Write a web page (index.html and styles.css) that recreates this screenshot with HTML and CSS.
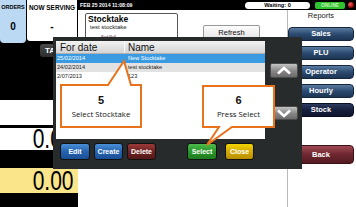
FILE: index.html
```html
<!DOCTYPE html>
<html>
<head>
<meta charset="utf-8">
<link rel="stylesheet" href="styles.css">
</head>
<body>
<div class="screen">
  <aside class="side">
    <div class="counters">
      <div class="orders"><div class="lbl">ORDERS</div><div class="val">0</div></div>
      <div class="serving"><div class="lbl">NOW SERVING</div><div class="val">-</div></div>
    </div>
    <div class="take">TAKE</div>
    <div class="band blank"></div>
    <div class="band total"><span class="big">0.00</span></div>
    <div class="band due"><span class="big">0.00</span></div>
  </aside>
  <main class="main">
    <header class="topbar">
      <span class="clock">FEB 25 2014 11:08:09</span>
      <span class="waiting">Waiting: 0</span>
      <span class="online">ONLINE</span>
      <span class="led"></span>
    </header>
    <div class="content">
      <section class="work">
        <div class="stock-card">
          <div class="card-title">Stocktake</div>
          <div class="card-sub">test stocktake</div>
          <div class="card-tiny">Bad Bull</div>
        </div>
        <div class="refresh">Refresh</div>
      </section>
      <nav class="reports">
        <div class="rhead">Reports</div>
        <div class="rbtn">Sales</div>
        <div class="rbtn">PLU</div>
        <div class="rbtn">Operator</div>
        <div class="rbtn">Hourly</div>
        <div class="rbtn active">Stock</div>
        <div class="rbtn back">Back</div>
      </nav>
    </div>
  </main>
</div>

<div class="dialog">
  <div class="list">
    <div class="lrow head"><span class="c1">For date</span><span class="c2">Name</span></div>
    <div class="lrow sel"><span class="c1">25/02/2014</span><span class="c2">New Stocktake</span></div>
    <div class="lrow alt"><span class="c1">24/02/2014</span><span class="c2">test stocktake</span></div>
    <div class="lrow"><span class="c1">2/07/2013</span><span class="c2">123</span></div>
  </div>
  <div class="arrows">
    <div class="arrow up"><svg width="16" height="9" viewBox="0 0 16 9"><polyline points="2,7.5 8,2 14,7.5" fill="none" stroke="#fff" stroke-width="2.6"/></svg></div>
    <div class="arrow down"><svg width="16" height="9" viewBox="0 0 16 9"><polyline points="2,1.5 8,7 14,1.5" fill="none" stroke="#fff" stroke-width="2.6"/></svg></div>
  </div>
  <div class="actions">
    <div class="dbtn blue">Edit</div>
    <div class="dbtn blue create">Create</div>
    <div class="dbtn red">Delete</div>
    <div class="dbtn green select">Select</div>
    <div class="dbtn yellow close">Close</div>
  </div>

  <div class="callout c5">
    <svg class="bubble" width="82" height="69" viewBox="0 0 82 69"><path d="M1,26 H48 L64,2 L71,26 H81 V68 H1 Z" fill="#fff" stroke="#e8731c" stroke-width="2" stroke-linejoin="miter"/></svg>
    <div class="num">5</div>
    <div class="cap">Select Stocktake</div>
  </div>
  <div class="callout c6">
    <svg class="bubble" width="73" height="62" viewBox="0 0 73 62"><path d="M1,1 H72 V42 H30 L5,60 L17,42 H1 Z" fill="#fff" stroke="#e8731c" stroke-width="2" stroke-linejoin="miter"/></svg>
    <div class="num">6</div>
    <div class="cap">Press Select</div>
  </div>
</div>
</body>
</html>
```

FILE: styles.css
```css
* { box-sizing: border-box; }
html, body { margin: 0; padding: 0; }
body {
  width: 356px;
  height: 207px;
  overflow: hidden;
  background: #000;
  font-family: "Liberation Sans", Arial, sans-serif;
  position: relative;
  color: #000;
}
.screen { display: flex; height: 207px; }

/* left column */
.side { width: 78px; flex: none; display: flex; flex-direction: column; }
.counters { display: flex; gap: 1px; align-items: flex-start; }
.orders { width: 26px; height: 43px; background: #bcd9f3; border-radius: 0 0 4px 4px; text-align: center; }
.serving { width: 50px; height: 41px; background: #fff; border-radius: 0 0 3px 3px; text-align: center; }
.lbl { font-weight: bold; font-size: 6.4px; line-height: 7px; padding-top: 4px; white-space: nowrap; }
.orders .lbl { font-size: 5.5px; }
.val { font-weight: bold; font-size: 10px; line-height: 10px; margin-top: 11px; }
.take {
  margin: 1px 0 0 40px; height: 13px; width: 38px;
  background: linear-gradient(#4a4a4a, #2c2c2c);
  color: #fff; font-weight: bold; font-size: 8px; line-height: 13px;
  padding-left: 5px; border-radius: 3px 0 0 3px;
}
.band { background: #fff; display: flex; justify-content: flex-end; align-items: center; padding-right: 5px; }
.blank { margin-top: 43px; height: 25px; }
.total { margin-top: 3px; height: 22px; }
.due { margin-top: 18px; height: 25px; background: #fbe58b; }
.big {
  display: block; font-size: 28px; line-height: 32px;
  transform: scaleX(0.75); transform-origin: right center;
}

/* main */
.main { flex: 1; display: flex; flex-direction: column; }
.topbar { height: 10px; flex: none; display: flex; align-items: center; padding: 0 2px; background: #000; }
.clock { color: #fff; font-weight: bold; font-size: 5.2px; white-space: nowrap; }
.waiting {
  margin-left: auto; width: 65px; height: 7px; background: #fff; border-radius: 4px;
  font-size: 5.6px; font-weight: bold; text-align: center; line-height: 7px;
}
.online {
  margin-left: 5px; width: 30px; height: 7px; background: #2fc32f; border-radius: 2px;
  color: #c8f5bd; font-size: 4.8px; font-weight: bold; text-align: center; line-height: 7px;
}
.led {
  margin-left: 3px; width: 6px; height: 6px; border-radius: 50%;
  background: radial-gradient(circle at 35% 35%, #ff6060, #8a0000 70%);
}
.content { flex: 1; background: #fff; display: flex; }
.work { flex: 1; display: flex; align-items: flex-start; padding: 3px 0 0 7px; }
.stock-card { width: 93px; height: 40px; border: 1px solid #555; border-radius: 2px; padding: 1px 2px; }
.card-title { font-weight: bold; font-size: 8.5px; line-height: 9px; }
.card-sub { font-size: 6px; line-height: 7px; margin-left: 2px; color: #222; }
.card-tiny { font-size: 4px; line-height: 5px; margin: 3px 0 0 13px; color: #5a3030; }
.refresh {
  margin: 12px 0 0 25px; width: 57px; height: 16px;
  border: 1px solid #999; border-radius: 2px;
  background: linear-gradient(#fdfdfd, #e2e2e2);
  font-size: 7.5px; line-height: 14px; text-align: center; color: #111;
}
.reports { width: 69px; flex: none; border-left: 1px solid #bbb; display: flex; flex-direction: column; }
.rhead { height: 17px; font-size: 7.5px; line-height: 11px; text-align: center; padding-right: 2px; color: #222; }
.rbtn {
  width: 66px; height: 14px; margin-bottom: 5px;
  border-radius: 4px; border: 1px solid #16273d;
  background: linear-gradient(#5a7ba0, #2c4b70 50%, #1c3554);
  color: #fff; font-weight: bold; font-size: 7.5px; line-height: 12px; text-align: center;
}
.rbtn.active { background: linear-gradient(#2e3a5c, #161f3c 50%, #0e1530); border-color: #0a0f22; }
.rbtn.back {
  margin-top: 23px; height: 19px; line-height: 17px;
  background: linear-gradient(#a04a52, #6e2730 50%, #551b22); border-color: #3a1015;
}

/* dialog overlay */
.dialog {
  position: absolute; left: 53px; top: 37px; width: 249px; height: 132px;
  padding: 4px 4px 0 3px; background: #272b2c;
  display: grid; grid-template-columns: 209px 28px; grid-template-rows: 98px 17px;
  column-gap: 5px; row-gap: 4px;
}
.list { background: #fff; overflow: hidden; }
.lrow { display: flex; height: 9px; font-size: 5.6px; line-height: 9px; color: #222; white-space: nowrap; }
.lrow .c1 { width: 71px; padding-left: 1px; }
.lrow .c2 { padding-left: 1px; }
.lrow.head {
  height: 13px; font-size: 10px; line-height: 13px; color: #111;
  background: linear-gradient(#f2f2f2, #d4d4d4); border-bottom: 1px solid #b0b0b0;
}
.lrow.head .c1 { width: 69px; padding-left: 4px; border-right: 1px solid #fafafa; }
.lrow.head .c2 { padding-left: 3px; }
.lrow.sel { background: #3a9be2; color: #fff; }
.lrow.alt { background: #e2e2e2; }
.arrows { display: flex; flex-direction: column; padding-top: 22px; }
.arrow {
  height: 15px; border: 1px solid #4a4a4a; border-radius: 2px;
  background: linear-gradient(#c4c4c4, #8a8a8a 50%, #6a6a6a);
  display: flex; align-items: center; justify-content: center;
}
.arrow.down { margin-top: 28px; height: 14px; }
.actions { grid-column: 1 / 3; display: flex; padding-left: 4px; }
.dbtn {
  width: 29px; height: 17px; border-radius: 3px; border: 1px solid #111;
  color: #fff; font-weight: bold; font-size: 7px; line-height: 15px; text-align: center;
  margin-right: 4px;
}
.dbtn.blue { background: linear-gradient(#4a8fd8, #2563b0 50%, #1a4f95); width: 30px; }
.dbtn.create { width: 29px; }
.dbtn.red { background: linear-gradient(#9a3a3a, #6e2222 50%, #561818); }
.dbtn.green { background: linear-gradient(#4cbc4c, #2a962a 50%, #1e7c1e); }
.dbtn.select { margin-left: 27px; width: 30px; margin-right: 8px; }
.dbtn.yellow { background: linear-gradient(#f2d400, #d4aa00 50%, #b88e00); }

.callout { position: absolute; text-align: center; font-family: "Open Sans", "Liberation Sans", sans-serif; color: #111; }
.callout .bubble { position: absolute; left: 0; }
.callout .num, .callout .cap { position: relative; }
.callout .num { font-weight: bold; font-size: 11px; line-height: 12px; font-family: "Liberation Sans", Arial, sans-serif; }
.callout .cap { font-size: 7.8px; line-height: 9px; margin-top: 4px; white-space: nowrap; }
.c5 { left: 7px; top: 47px; width: 82px; height: 44px; padding-top: 10px; }
.c5 .bubble { top: -25px; }
.c6 { left: 149px; top: 48px; width: 73px; height: 43px; padding-top: 9px; }
.c6 .bubble { top: 0; }
```
